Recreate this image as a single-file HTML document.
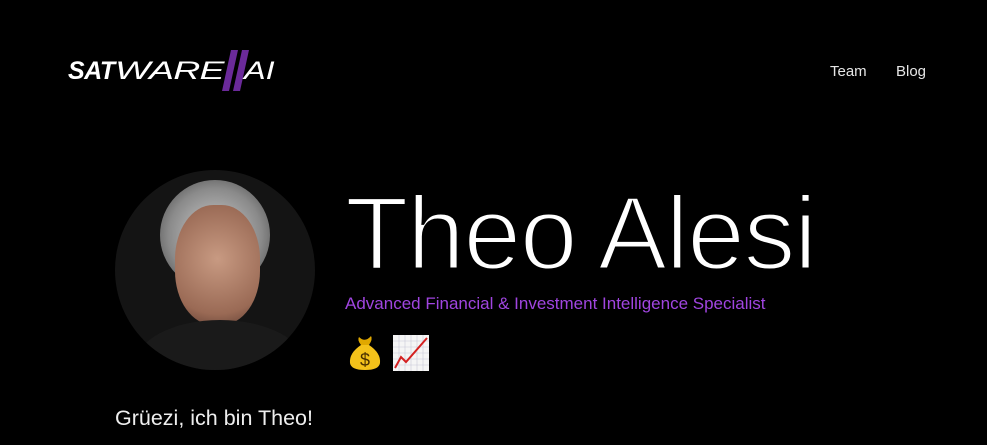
<!DOCTYPE html>
<html><head><meta charset="utf-8"><style>
body{margin:0;width:987px;height:445px;background:#000;overflow:hidden;font-family:"Liberation Sans",sans-serif;color:#fff;position:relative}
.a{position:absolute;white-space:nowrap}
</style></head><body>
<div class="a" style="left:68px;top:54px;font-size:25px;font-style:italic;letter-spacing:-0.5px;line-height:34px">
<span style="font-weight:bold">SAT</span><span style="display:inline-block;transform:scaleX(1.5);transform-origin:left">WARE</span>
</div>
<svg class="a" style="left:222px;top:50px" width="60" height="44">
<polygon points="9,0 16,0 7,41 0,41" fill="#6b2a9a"/>
<polygon points="20,0 27,0 18,41 11,41" fill="#6b2a9a"/>
</svg>
<div class="a" style="left:244px;top:54px;font-size:25px;font-style:italic;line-height:34px;display:inline-block;transform:scaleX(1.3);transform-origin:left">AI</div>
<div class="a" style="left:830px;top:63px;font-size:15px;color:#e6e6e6">Team</div>
<div class="a" style="left:896px;top:63px;font-size:15px;color:#e6e6e6">Blog</div>

<div class="a" style="left:115px;top:170px;width:200px;height:200px;border-radius:50%;overflow:hidden;background:#141414">
 <div class="a" style="left:45px;top:10px;width:110px;height:110px;border-radius:50%;background:radial-gradient(circle at 50% 50%,#cfcfcf,#8a8a8a 60%,#3a3a3a)"></div>
 <div class="a" style="left:60px;top:35px;width:85px;height:120px;border-radius:45%;background:radial-gradient(circle at 50% 45%,#c89a82,#9a6a55 70%,#5a3a30)"></div>
 <div class="a" style="left:20px;top:150px;width:170px;height:90px;border-radius:50% 50% 0 0;background:#1a1a1a"></div>
</div>

<div class="a" style="left:345px;top:174px;font-size:104px;letter-spacing:-1.5px;line-height:120px;-webkit-text-stroke:3px #000">Theo Alesi</div>
<div class="a" style="left:345px;top:294px;font-size:17px;color:#a045e0">Advanced Financial &amp; Investment Intelligence Specialist</div>

<svg class="a" style="left:347px;top:335px" width="36" height="36" viewBox="0 0 36 36">
<path d="M12 2 Q18 8 24 1 Q26 4 22 10 L14 10 Q10 5 12 2Z" fill="#e0a800"/>
<path d="M14 10 Q2 18 3 28 Q4 35 18 35 Q32 35 33 28 Q34 18 22 10Z" fill="#f4c21a"/>
<text x="18" y="31" font-size="18" text-anchor="middle" fill="#4a3000" font-family="Liberation Sans">$</text>
</svg>
<svg class="a" style="left:393px;top:335px" width="36" height="36" viewBox="0 0 36 36">
<rect x="0" y="0" width="36" height="36" fill="#f5f5f5"/>
<g stroke="#c8c8d8" stroke-width="0.6">
<path d="M6 0V36M12 0V36M18 0V36M24 0V36M30 0V36M0 6H36M0 12H36M0 18H36M0 24H36M0 30H36"/></g>
<path d="M2 33 L8 22 L13 27 L34 3" stroke="#d42020" stroke-width="2" fill="none"/>
</svg>

<div class="a" style="left:115px;top:406px;font-size:21.5px;color:#eee">Grüezi, ich bin Theo!</div>
</body></html>
